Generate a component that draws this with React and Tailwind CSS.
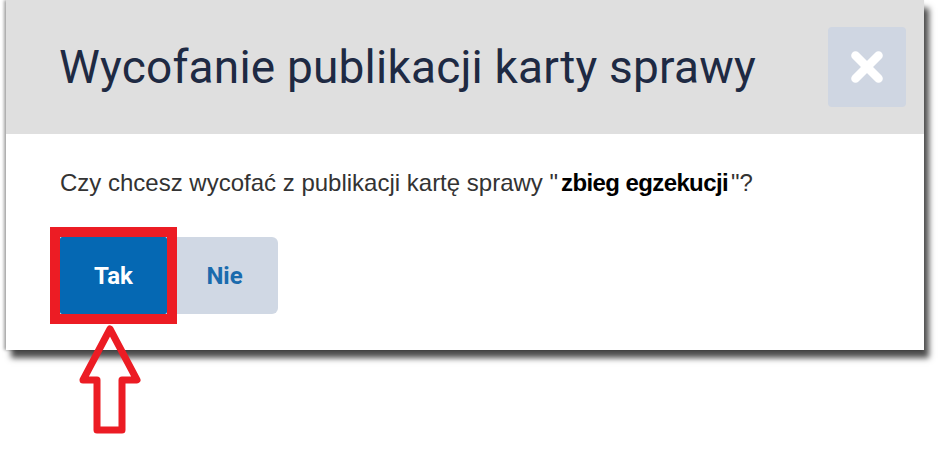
import { X } from "lucide-react";

const UpArrow = () => (
  <svg
    className="absolute left-[78px] top-[322px]"
    width="64"
    height="116"
    viewBox="0 0 64 116"
    fill="none"
  >
    {/* outlined arrow pointing up at the Tak button */}
    <path
      d="M32 7 L59 58 L44 58 L44 108 L19 108 L19 58 L5 58 Z"
      stroke="#ec1c24"
      strokeWidth="7"
      strokeLinejoin="round"
    />
  </svg>
);

export default function App() {
  return (
    <div className="relative w-[939px] h-[453px] bg-white overflow-hidden">
      <div className="ml-[6px] w-[918px] bg-white shadow-[5px_8px_6px_rgba(0,0,0,0.7),-2px_0_3px_rgba(0,0,0,0.35)]">
        <div className="h-[134px] bg-[#dfdfdf] flex items-center justify-between pl-[53px] pr-[18px]">
          <h2 className="text-[46px] leading-none text-[#1e2a43] font-['Roboto',sans-serif] tracking-[0.2px]">
            Wycofanie publikacji karty sprawy
          </h2>
          <button className="w-[78px] h-[80px] rounded-[4px] bg-[#cfd6e2] flex items-center justify-center">
            <X className="w-[46px] h-[46px] text-white" strokeWidth={4.5} />
          </button>
        </div>
        <div className="pt-[36px] pb-[36px] px-[54px]">
          <p className="text-[24px] leading-[26px] text-[#333333] font-['Liberation_Sans',Arial,sans-serif]">
            Czy chcesz wycofać z publikacji kartę sprawy "
            <b className="font-bold text-black mx-[3px] tracking-[-0.6px]">zbieg egzekucji</b>
            "?
          </p>
          <div className="mt-[41px] flex">
            <button className="relative w-[107px] h-[77px] rounded-[2px] bg-[#0568b3] text-white text-[24px] font-bold font-['Roboto',sans-serif]">
              Tak
              <span className="absolute -inset-[10px] border-[10px] border-[#ec1c24]" />
            </button>
            <button className="w-[111px] h-[77px] pl-[4px] rounded-r-[6px] bg-[#d0d8e4] text-[#1a6bad] text-[24px] font-bold font-['Roboto',sans-serif]">
              Nie
            </button>
          </div>
        </div>
      </div>
      <UpArrow />
    </div>
  );
}
